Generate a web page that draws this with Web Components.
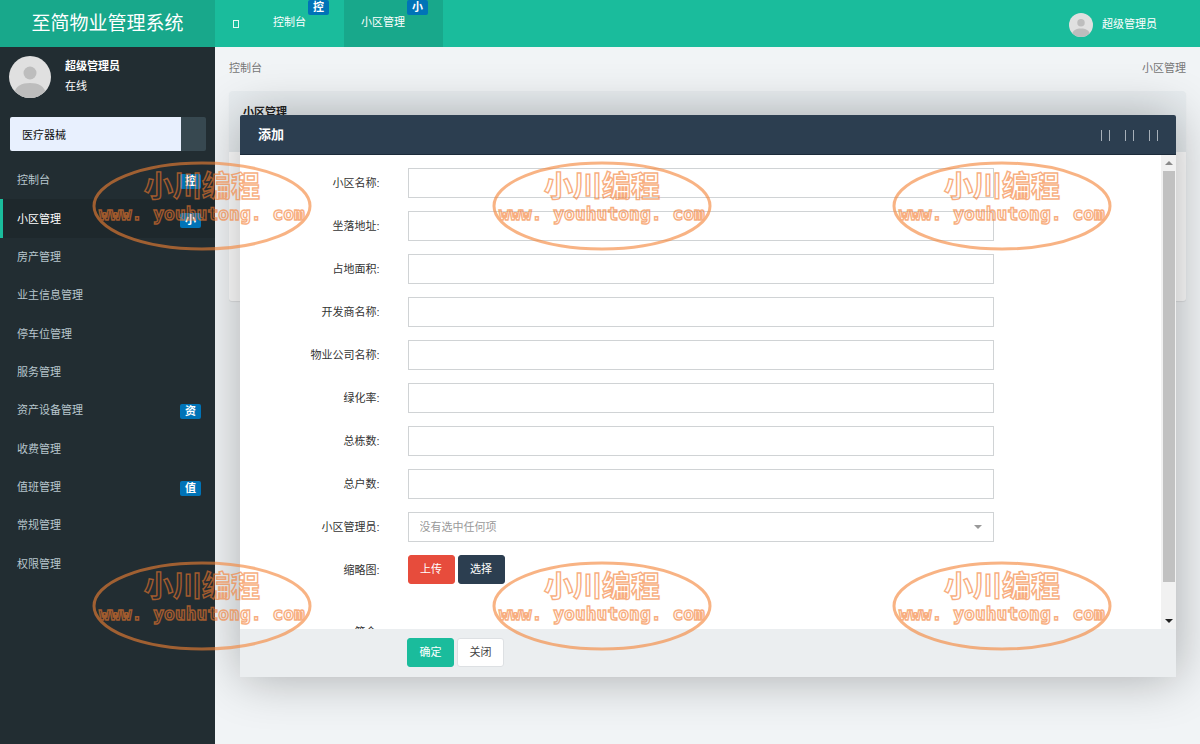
<!DOCTYPE html>
<html lang="zh-CN">
<head>
<meta charset="utf-8">
<title>至简物业管理系统</title>
<style>
  html, body { margin: 0; height: 100%; }
  body {
    font: 11px/16px "Liberation Sans", "Noto Sans CJK SC", sans-serif;
    color: #333;
    background: #f1f4f6;
  }
</style>
</head>
<body>
<estate-app></estate-app>

<script>
const define = (name, html, setup) => {
  const template = document.createElement('template');
  template.innerHTML = html;
  customElements.define(name, class extends HTMLElement {
    connectedCallback() {
      if (this.shadowRoot) return;
      this.attachShadow({ mode: 'open' }).append(template.content.cloneNode(true));
      if (setup) setup(this, this.shadowRoot);
    }
  });
};

/* Round default portrait; its size comes from --size */
define('user-avatar', `
  <style>
    :host { display: block; flex: none; width: var(--size, 42px); height: var(--size, 42px); }
    svg { display: block; width: 100%; height: 100%; border-radius: 50%; }
  </style>
  <svg viewBox="0 0 42 42" aria-hidden="true">
    <rect width="42" height="42" fill="#e0e0e0"/>
    <circle cx="21" cy="17" r="6.5" fill="#bdbdbd"/>
    <path d="M5 38c1-8 8-11 16-11s15 3 16 11v4H5z" fill="#bdbdbd"/>
  </svg>`);

define('count-badge', `
  <style>
    :host {
      display: block; box-sizing: border-box; min-width: 21px; height: 15px; padding: 0 5px;
      border-radius: 2px; background: #0073b7; color: #fff;
      font-size: 11px; font-weight: bold; line-height: 14px; text-align: center;
    }
  </style>
  <slot></slot>`);

define('nav-tab', `
  <style>
    :host { display: block; position: relative; }
    a {
      display: flex; align-items: center; height: 44px; padding: 0 38px 3px 17px;
      color: #fff; text-decoration: none;
    }
    :host([active]) a { background: #18a88b; }
    count-badge { position: absolute; top: 0; right: 15px; }
  </style>
  <a href="#"><slot></slot></a><count-badge></count-badge>`,
  (host, root) => { root.querySelector('count-badge').textContent = host.getAttribute('badge'); });

define('app-header', `
  <style>
    :host { display: flex; height: 47px; background: #1abc9c; color: #fff; }
    .logo {
      display: flex; align-items: center; justify-content: center; width: 215px; flex: none;
      background: #18a88b; color: #fff; font-size: 19px; text-decoration: none;
    }
    .toggle {
      display: flex; align-items: center; justify-content: center; width: 41px; height: 48px;
      padding: 0; border: 0; background: none;
    }
    .toggle i { box-sizing: border-box; width: 6px; height: 8px; border: 1px solid #e6f8f4; }
    nav { display: flex; }
    .user {
      display: flex; align-items: center; gap: 9px; margin-left: auto; padding-right: 43px;
      color: #fff; text-decoration: none;
    }
    user-avatar { --size: 24px; margin-top: 3px; }
  </style>
  <a class="logo" href="#">至简物业管理系统</a>
  <button class="toggle" aria-label="切换侧栏"><i></i></button>
  <nav>
    <nav-tab badge="控">控制台</nav-tab>
    <nav-tab badge="小" active>小区管理</nav-tab>
  </nav>
  <a class="user" href="#"><user-avatar></user-avatar><span>超级管理员</span></a>`);

define('menu-item', `
  <style>
    :host { display: block; box-sizing: border-box; border-left: 3px solid transparent; }
    :host([active]) { background: #1e282c; border-color: #1abc9c; }
    a {
      display: flex; align-items: center; justify-content: space-between; height: 100%;
      padding: 0 14px 0 14px; color: #b8c7ce; text-decoration: none;
    }
    :host([active]) a { color: #fff; }
    count-badge { margin-top: 3px; }
  </style>
  <a href="#"><span><slot></slot></span></a>`,
  (host, root) => {
    if (!host.hasAttribute('badge')) return;
    const badge = document.createElement('count-badge');
    badge.textContent = host.getAttribute('badge');
    root.querySelector('a').append(badge);
  });

define('app-sidebar', `
  <style>
    :host { display: flex; flex-direction: column; width: 215px; flex: none; background: #222d32; color: #fff; }
    .user { display: flex; gap: 14px; padding: 9px 9px 0; }
    .user p { margin: 0; line-height: 20px; }
    form { display: flex; margin: 19px 9px 10px 10px; height: 34px; }
    input {
      box-sizing: border-box; flex: 1; min-width: 0; padding: 2px 12px 0; border: 0;
      border-radius: 2px 0 0 2px; background: #e8f0fe; color: #111; font: inherit;
    }
    form button { width: 25px; padding: 0; border: 0; border-radius: 0 2px 2px 0; background: #374850; }
    nav { display: grid; grid-auto-rows: 1fr; height: 422px; }
  </style>
  <div class="user">
    <user-avatar></user-avatar>
    <div><p><b>超级管理员</b></p><p>在线</p></div>
  </div>
  <form><input type="text" aria-label="搜索菜单" value="医疗器械"><button type="button" aria-label="搜索"></button></form>
  <nav>
    <menu-item badge="控">控制台</menu-item>
    <menu-item badge="小" active>小区管理</menu-item>
    <menu-item>房产管理</menu-item>
    <menu-item>业主信息管理</menu-item>
    <menu-item>停车位管理</menu-item>
    <menu-item>服务管理</menu-item>
    <menu-item badge="资">资产设备管理</menu-item>
    <menu-item>收费管理</menu-item>
    <menu-item badge="值">值班管理</menu-item>
    <menu-item>常规管理</menu-item>
    <menu-item>权限管理</menu-item>
  </nav>`);

define('page-content', `
  <style>
    :host { display: block; flex: 1; min-width: 0; padding: 0 14px; }
    .crumbs { display: flex; justify-content: space-between; padding: 13px 0 15px; color: #777; }
    .crumbs a { color: inherit; text-decoration: none; }
    section { border-radius: 3px; background: #fff; box-shadow: 0 1px 1px rgba(0,0,0,.08); }
    header { height: 48px; padding: 13px 14px 0; background: #e8edf0; border-radius: 3px 3px 0 0; color: #222; }
    h2 { margin: 0; font-size: 11px; line-height: 16px; }
    .body { height: 149px; }
  </style>
  <div class="crumbs"><a href="#">控制台</a><a href="#">小区管理</a></div>
  <section><header><h2>小区管理</h2></header><div class="body"></div></section>`);

/* Label on the left, control on the right in a 2 / 8 / 2 grid */
define('form-row', `
  <style>
    :host { display: grid; grid-template-columns: 2fr 8fr 2fr; min-height: 30px; }
    label, .label { padding-right: 14px; line-height: 30px; text-align: right; }
    .field { position: relative; display: flex; gap: 3px; margin: 0 14px; min-width: 0; }
    input, select {
      box-sizing: border-box; width: 100%; height: 30px; padding: 0 11px;
      border: 1px solid #d0d3d5; border-radius: 0; background: #fff; font: inherit; color: #999;
      appearance: none;
    }
    select { padding-bottom: 1px; }
    .caret {
      position: absolute; right: 12px; top: 13px;
      border: 4px solid transparent; border-top-color: #999; border-bottom: 0;
    }
  </style>
  <label for="control"></label><div class="field"></div>`,
  (host, root) => {
    const label = root.querySelector('label');
    const field = root.querySelector('.field');
    const kind = host.getAttribute('kind') || 'text';
    label.textContent = host.getAttribute('label') + ':';
    if (kind === 'text') field.innerHTML = '<input id="control" type="text">';
    if (kind === 'select') field.innerHTML = '<select id="control"><option>没有选中任何项</option></select><i class="caret"></i>';
    if (kind === 'slot') {
      const caption = document.createElement('span');
      caption.className = 'label';
      caption.textContent = label.textContent;
      label.replaceWith(caption);
      field.innerHTML = '<slot></slot>';
    }
  });

define('ui-button', `
  <style>
    :host { display: block; }
    button {
      box-sizing: border-box; width: 47px; height: 29px; padding: 0 0 1px;
      border: 1px solid var(--edge, transparent); border-radius: 3px;
      background: var(--fill, #fff); color: var(--ink, #fff); font: inherit;
    }
    :host([tone="red"]) { --fill: #e74c3c; --edge: #e74c3c; }
    :host([tone="navy"]) { --fill: #2c3e50; --edge: #2c3e50; }
    :host([tone="green"]) { --fill: #1abc9c; --edge: #1abc9c; }
    :host([tone="plain"]) { --ink: #444; --edge: #dde0e3; }
  </style>
  <button type="button"><slot></slot></button>`);

define('scroll-rail', `
  <style>
    :host { display: flex; flex-direction: column; align-items: center; width: 15px; flex: none; background: #f1f1f1; }
    i { border: 4px solid transparent; }
    .up { margin: 6px 0; border-bottom-color: #8a8a8a; border-top: 0; }
    .down { margin: 6px 0; border-top-color: #222; border-bottom: 0; }
    .track { flex: 1; width: 12px; }
    .thumb { height: 93%; background: #c1c1c1; }
  </style>
  <i class="up"></i><div class="track"><div class="thumb"></div></div><i class="down"></i>`);

define('modal-window', `
  <style>
    :host {
      position: absolute; left: 20%; right: 2%; top: 115px; bottom: 9%;
      display: flex; flex-direction: column; background: #fff; border-radius: 2px;
      box-shadow: 1px 1px 50px rgba(0,0,0,.3);
    }
    header {
      box-sizing: border-box; display: flex; align-items: center; justify-content: space-between;
      height: 40px; flex: none; padding: 0 18px; border-bottom: 1px solid #1c2b3a;
      border-radius: 2px 2px 0 0; background: #2c3e50; color: #fff;
    }
    h1 { margin: 0; font-size: 13px; font-weight: bold; line-height: 20px; }
    .tools { display: flex; gap: 15px; padding: 2px 0 0; }
    .tools button {
      box-sizing: border-box; width: 9px; height: 11px; padding: 0;
      border: solid #a7b0b9; border-width: 0 1px; background: none;
    }
    .body { display: flex; flex: 1; min-height: 0; }
    .form { flex: 1; min-width: 0; overflow: hidden; padding-top: 13px; }
    .form > slot { display: flex; flex-direction: column; gap: 13px; }
    footer { display: flex; gap: 3px; height: 39px; flex: none; padding: 9px 0 0 167px; background: #ebeef0; }
  </style>
  <header>
    <h1>添加</h1>
    <div class="tools"><button aria-label="最小化"></button><button aria-label="最大化"></button><button aria-label="关闭窗口"></button></div>
  </header>
  <div class="body"><div class="form"><slot></slot></div><scroll-rail></scroll-rail></div>
  <footer><slot name="actions"></slot></footer>`);

/* Repeating site stamp, laid over the whole page */
const stamp = document.createElement('template');
stamp.innerHTML = `
  <svg viewBox="0 0 220 90">
    <ellipse cx="110" cy="45" rx="108" ry="43"/>
    <text class="name" x="110" y="36">小川编程</text>
    <text class="url" x="110" y="59">www. youhutong. com</text>
  </svg>`;
define('site-stamp', `
  <style>
    :host {
      position: absolute; inset: 0; z-index: 2; overflow: hidden; pointer-events: none;
      display: grid; grid-template-columns: repeat(auto-fill, 400px); grid-auto-rows: 400px;
      padding: 161px 0 0 92px; margin-right: -92px; clip-path: inset(0 92px 0 0);
    }
    svg { display: block; width: 220px; height: 90px; opacity: .6; overflow: visible; }
    ellipse { fill: none; stroke: #f58233; stroke-width: 3; }
    text { fill: none; stroke: #f47a2c; stroke-width: 1.4; text-anchor: middle; font-weight: bold; }
    .name { font-family: "Noto Sans CJK SC", sans-serif; font-size: 29px; }
    .url { font-family: "DejaVu Sans Mono", monospace; font-size: 18px; }
  </style>`,
  (host, root) => {
    for (let i = 0; i < 6; i++) root.append(stamp.content.cloneNode(true));
  });

define('estate-app', `
  <style>
    :host { display: flex; flex-direction: column; min-height: 100%; position: relative; overflow: hidden; }
    main { display: flex; flex: 1; }
    app-header, app-sidebar { position: relative; z-index: 1; }
  </style>
  <app-header></app-header>
  <main><app-sidebar></app-sidebar><page-content></page-content></main>
  <modal-window>
    <form-row label="小区名称"></form-row>
    <form-row label="坐落地址"></form-row>
    <form-row label="占地面积"></form-row>
    <form-row label="开发商名称"></form-row>
    <form-row label="物业公司名称"></form-row>
    <form-row label="绿化率"></form-row>
    <form-row label="总栋数"></form-row>
    <form-row label="总户数"></form-row>
    <form-row label="小区管理员" kind="select"></form-row>
    <form-row label="缩略图" kind="slot" style="margin-bottom:19px">
      <ui-button tone="red">上传</ui-button><ui-button tone="navy">选择</ui-button>
    </form-row>
    <form-row label="简介" kind="slot"></form-row>
    <ui-button slot="actions" tone="green">确定</ui-button>
    <ui-button slot="actions" tone="plain">关闭</ui-button>
  </modal-window>
  <site-stamp></site-stamp>`);
</script>
</body>
</html>
